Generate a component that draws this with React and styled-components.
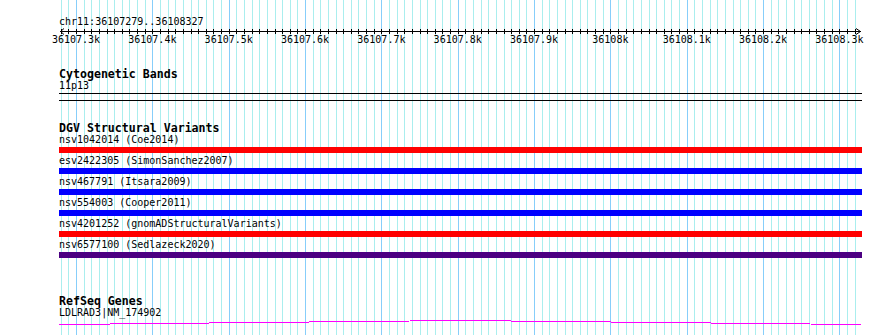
import React from 'react'
import styled, { createGlobalStyle } from 'styled-components'

const REGION = { ref: 'chr11', start: 36107279, end: 36108327 }
const VIEW_LEFT = 60
const VIEW_WIDTH = 800
const scale = VIEW_WIDTH / (REGION.end - REGION.start)
const bpToX = bp => VIEW_LEFT + (bp - REGION.start) * scale
const px = x => Math.round(x) + 0.5

const ticks = []
for (let p = Math.ceil(REGION.start / 10) * 10; p <= REGION.end; p += 10) {
  ticks.push(p)
}

const variants = [
  { name: 'nsv1042014', source: 'Coe2014', color: '#ff0000' },
  { name: 'esv2422305', source: 'SimonSanchez2007', color: '#0000ff' },
  { name: 'nsv467791', source: 'Itsara2009', color: '#0000ff' },
  { name: 'nsv554003', source: 'Cooper2011', color: '#0000ff' },
  { name: 'nsv4201252', source: 'gnomADStructuralVariants', color: '#ff0000' },
  { name: 'nsv6577100', source: 'Sedlazeck2020', color: '#4b0082' },
]

const formatTick = p => `${p / 1000}k`

export default function App() {
  return (
    <Page>
      <GlobalStyle />
      <GridLayer width={890} height={335}>
        {ticks.map(p => (
          <line
            key={p}
            x1={px(bpToX(p))}
            x2={px(bpToX(p))}
            y1={0}
            y2={335}
            stroke={p % 100 === 0 ? '#87cefa' : '#aaeeee'}
            shapeRendering="crispEdges"
          />
        ))}
      </GridLayer>

      <Tracks>
        <Location>{REGION.ref}:{REGION.start}..{REGION.end}</Location>
        <Ruler width={890} height={20}>
          <line x1={60} x2={861} y1={3.5} y2={3.5} stroke="#000" shapeRendering="crispEdges" />
          {ticks.map(p => (
            <line key={p} x1={px(bpToX(p))} x2={px(bpToX(p))} y1={1} y2={6} stroke="#000" shapeRendering="crispEdges" />
          ))}
          <polyline points="64,0.5 60.5,3.5 64,6.5" fill="none" stroke="#000" />
          <polyline points="856,0.5 860.5,3.5 856,6.5" fill="none" stroke="#000" />
          {ticks.filter(p => p % 100 === 0).map(p => (
            <TickLabel key={p} x={bpToX(p)} y={15} textAnchor="middle">{formatTick(p)}</TickLabel>
          ))}
        </Ruler>

        <Track $gap={20}>
          <TrackTitle>Cytogenetic Bands</TrackTitle>
          <FeatureLabel>11p13</FeatureLabel>
          <BandBox />
        </Track>

        <Track $gap={21}>
          <TrackTitle>DGV Structural Variants</TrackTitle>
          {variants.map(v => (
            <Feature key={v.name}>
              <FeatureLabel>{v.name} ({v.source})</FeatureLabel>
              <FeatureBar $color={v.color} />
            </Feature>
          ))}
        </Track>

        <Track $gap={35}>
          <TrackTitle>RefSeq Genes</TrackTitle>
          <FeatureLabel>LDLRAD3|NM_174902</FeatureLabel>
          <GeneModel width={803} height={8}>
            <polyline
              points="0,5.5 1,5.5 401,1.5 801,5.5 802,5.5"
              fill="none"
              stroke="#ff00ff"
              shapeRendering="crispEdges"
            />
          </GeneModel>
        </Track>
      </Tracks>
    </Page>
  )
}

const GlobalStyle = createGlobalStyle`
  html, body {
    margin: 0;
    padding: 0;
    background: #fff;
  }
  body {
    font-family: "DejaVu Sans Mono", "Liberation Mono", monospace;
  }
`
const Page = styled.div`
  position: relative;
  width: 890px;
  height: 335px;
  overflow: hidden;
  background: #fff;
  color: #000;
  font-family: "DejaVu Sans Mono", "Liberation Mono", monospace;
`
const GridLayer = styled.svg`
  position: absolute;
  top: 0;
  left: 0;
  z-index: 0;
`
const Tracks = styled.div`
  position: relative;
  z-index: 1;
  display: flex;
  flex-direction: column;
  padding-top: 16px;
`
const Location = styled.div`
  padding-left: 59px;
  font-size: 10px;
  line-height: 12px;
`
const Ruler = styled.svg`
  display: block;
  overflow: visible;
`
const TickLabel = styled.text`
  font-family: "DejaVu Sans Mono", "Liberation Mono", monospace;
  font-size: 10px;
  fill: #000;
`
const Track = styled.section`
  margin-top: ${props => props.$gap}px;
  padding-left: 59px;
  width: 803px;
`
const TrackTitle = styled.div`
  font-weight: bold;
  font-size: 11.6px;
  line-height: 12px;
  white-space: nowrap;
`
const FeatureLabel = styled.div`
  font-size: 10px;
  line-height: 12px;
  white-space: nowrap;
`
const Feature = styled.div`
  padding-bottom: 2px;
`
const FeatureBar = styled.div`
  margin-top: 1px;
  height: 6px;
  background: ${props => props.$color};
`
const BandBox = styled.div`
  margin-top: 1px;
  height: 6px;
  border-top: 1px solid #000;
  border-bottom: 1px solid #000;
`
const GeneModel = styled.svg`
  display: block;
`
